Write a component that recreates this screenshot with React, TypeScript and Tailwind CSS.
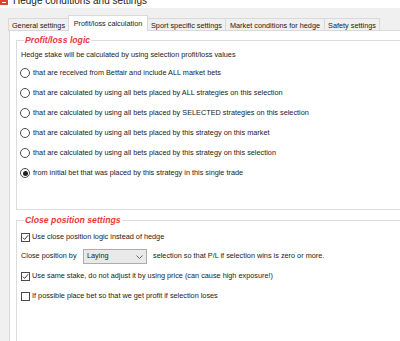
import React from "react";

function Radio({ checked }: { checked?: boolean }) {
  return (
    <span className="ml-[-1px] flex h-[10px] w-[10px] shrink-0 items-center justify-center rounded-full border border-[#4a4a4a] bg-white">
      {checked ? <span className="h-[5px] w-[5px] rounded-full bg-[#222222]" /> : null}
    </span>
  );
}

function Check({ checked }: { checked?: boolean }) {
  return (
    <span className="flex h-[9px] w-[9px] shrink-0 items-center justify-center border border-[#4a4a4a] bg-white">
      {checked ? (
        <svg width="7" height="7" viewBox="0 0 7 7">
          <polyline points="0.8,3.6 2.6,5.4 6.2,1.2" fill="none" stroke="#222" strokeWidth="0.9" />
        </svg>
      ) : null}
    </span>
  );
}

const radios = [
  "that are received from Betfair and include ALL market bets",
  "that are calculated by using all bets placed by ALL strategies on this selection",
  "that are calculated by using all bets placed by SELECTED strategies on this selection",
  "that are calculated by using all bets placed by this strategy on this market",
  "that are calculated by using all bets placed by this strategy on this selection",
  "from initial bet that was placed by this strategy in this single trade",
];

const tabs = [
  { label: "General settings", w: "w-[61px]" },
  { label: "Profit/loss calculation", w: "w-[80px]", active: true },
  { label: "Sport specific settings", w: "w-[79px]" },
  { label: "Market conditions for hedge", w: "w-[100px]" },
  { label: "Safety settings", w: "w-[56px]" },
];

export default function App() {
  return (
    <div className="relative flex h-[341px] w-[400px] flex-col overflow-hidden bg-[#f0f0f0] font-['Liberation_Sans',Arial,sans-serif] text-[7.3px] text-[#1a1a1a]">
      {/* title bar (cropped by the screenshot) */}
      <div className="flex h-[8px] shrink-0 items-end overflow-hidden bg-white">
        <div className="mb-[3px] flex h-[6px] w-[8px] shrink-0 items-center justify-center bg-[#e2412f]">
          <span className="h-[1px] w-[4px] bg-white" />
        </div>
        <span className="ml-[5px] mb-[2px] text-[10px] leading-[10px] text-[#222]">Hedge conditions and settings</span>
      </div>

      {/* tabs */}
      <div className="mt-[7px] flex h-[16px] shrink-0 items-end pl-[9px]">
        {tabs.map((t) => (
          <div
            key={t.label}
            className={
              t.active
                ? `relative z-10 -ml-[1px] flex h-[16px] ${t.w} items-start justify-center border-l border-r border-t border-[#d9d9d9] bg-white pt-[3px] leading-[9px]`
                : `-ml-[1px] flex h-[13px] ${t.w} items-center justify-center border-l border-r border-t border-[#d9d9d9] bg-[#f0f0f0] leading-[9px]`
            }
          >
            {t.label}
          </div>
        ))}
      </div>

      {/* panel */}
      <div className="-mt-[1px] ml-[9px] flex h-[360px] w-[430px] shrink-0 flex-col border border-[#d9d9d9] bg-white pl-[6px] pt-[4px]">
        <fieldset className="w-[420px] border border-[#dcdcdc] pb-[26px] pl-[4px]">
          <legend className="ml-[3px] px-[1px] text-[8.7px] font-bold italic leading-[11px] text-[#e8383c]">
            Profit/loss logic
          </legend>
          <div className="pt-[4px] leading-[9px]">
            Hedge stake will be calculated by using selection profit/loss values
          </div>
          <div className="mt-[4px] flex flex-col">
            {radios.map((r, i) => (
              <div key={r} className="flex h-[20px] items-center gap-[3px]">
                <Radio checked={i === 5} />
                <span>{r}</span>
              </div>
            ))}
          </div>
        </fieldset>

        <fieldset className="mt-[5px] h-[160px] w-[420px] border border-[#dcdcdc] pl-[4px]">
          <legend className="ml-[3px] px-[1px] text-[8.7px] font-bold italic leading-[11px] text-[#e8383c]">
            Close position settings
          </legend>
          <div className="flex flex-col pt-[1px]">
            <div className="flex h-[20px] items-center gap-[2px]">
              <Check checked />
              <span>Use close position logic instead of hedge</span>
            </div>
            <div className="flex h-[19px] items-center">
              <span className="w-[62px]">Close position by</span>
              <div className="flex h-[15px] w-[64px] items-center justify-between border border-[#acacac] bg-[#e9e9e9] pl-[3px] pr-[3px]">
                <span>Laying</span>
                <svg width="7" height="4" viewBox="0 0 7 4">
                  <polyline points="0.5,0.5 3.5,3.5 6.5,0.5" fill="none" stroke="#444" strokeWidth="0.8" />
                </svg>
              </div>
              <span className="ml-[6px]">selection so that P/L if selection wins is zero or more.</span>
            </div>
            <div className="flex h-[20px] items-center gap-[2px]">
              <Check checked />
              <span>Use same stake, do not adjust it by using price (can cause high exposure!)</span>
            </div>
            <div className="flex h-[20px] items-center gap-[2px]">
              <Check />
              <span>If possible place bet so that we get profit if selection loses</span>
            </div>
          </div>
        </fieldset>
      </div>
    </div>
  );
}
